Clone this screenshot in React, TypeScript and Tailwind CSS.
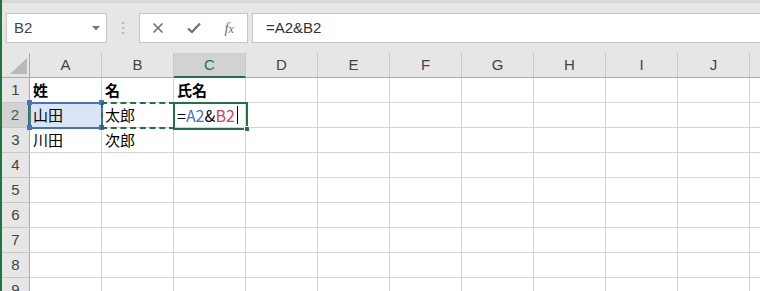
import React from "react"

const cols = ["A", "B", "C", "D", "E", "F", "G", "H", "I", "J", ""]
const rows = [1, 2, 3, 4, 5, 6, 7, 8, 9]

const data: Record<string, React.ReactNode> = {
  A1: <span className="font-bold">姓</span>,
  B1: <span className="font-bold">名</span>,
  C1: <span className="font-bold">氏名</span>,
  A2: "山田",
  B2: "太郎",
  C2: (
    <span className="flex items-center text-[16px]">
      <span>=</span>
      <span className="text-[#4a6fd0]">A2</span>
      <span>&amp;</span>
      <span className="text-[#d23f63]">B2</span>
      <span className="ml-[2px] inline-block h-[18px] w-px bg-black" />
    </span>
  ),
  A3: "川田",
  B3: "次郎",
}

function Handle({ className }: { className: string }) {
  return <div className={"absolute h-[5px] w-[5px] " + className} />
}

export default function App() {
  return (
    <div className="flex h-[291px] w-[760px] overflow-hidden bg-white font-['Liberation_Sans',sans-serif]">
      <div className="w-[2px] shrink-0 bg-[#217346]" />
      <div className="flex min-w-0 flex-1 flex-col">
        {/* formula toolbar */}
        <div className="flex h-[53px] shrink-0 items-start border-t-[3px] border-[#d9d9d9] bg-[#e6e6e6] pl-[4px] pt-[10px]">
          <div className="flex h-[30px] w-[101px] items-center justify-between border border-[#c6c6c6] bg-white pl-[7px] pr-[6px] text-[15px] text-[#444]">
            <span>B2</span>
            <svg width="8" height="5" viewBox="0 0 8 5">
              <path d="M0 0 L8 0 L4 4.5 Z" fill="#7a7a7a" />
            </svg>
          </div>
          <div className="flex h-[30px] w-[32px] flex-col items-center justify-center gap-[3px]">
            <div className="h-[2px] w-[2px] bg-[#b5b5b5]" />
            <div className="h-[2px] w-[2px] bg-[#b5b5b5]" />
            <div className="h-[2px] w-[2px] bg-[#b5b5b5]" />
          </div>
          <div className="flex h-[30px] w-[109px] items-center border border-[#c6c6c6] bg-white">
            <div className="flex w-[36px] justify-center">
              <svg width="12" height="12" viewBox="0 0 12 12">
                <path d="M1.5 1.5 L10.5 10.5 M10.5 1.5 L1.5 10.5" stroke="#6f6f6f" strokeWidth="1.6" />
              </svg>
            </div>
            <div className="flex w-[36px] justify-center">
              <svg width="14" height="12" viewBox="0 0 14 12">
                <path d="M1 6.5 L5 10 L13 1.5" stroke="#6f6f6f" strokeWidth="2.2" fill="none" />
              </svg>
            </div>
            <div className="flex w-[36px] justify-center font-['Liberation_Serif',serif] text-[15px] italic text-[#6f6f6f]">
              <span>
                f<span className="text-[12px]">x</span>
              </span>
            </div>
          </div>
          <div className="ml-[4px] flex h-[30px] flex-1 items-center border border-r-0 border-[#c6c6c6] bg-white pl-[13px] text-[15px] text-[#333]">
            =A2&amp;B2
          </div>
        </div>

        {/* sheet grid */}
        <div className="relative flex-1 text-[15px]">
          <div className="flex h-[25px] bg-[#e6e6e6]">
            <div className="relative h-[25px] w-[28px] shrink-0 border-b border-r border-[#ababab]">
              <svg className="absolute left-[8px] top-[5px]" width="17" height="16" viewBox="0 0 17 16">
                <path d="M17 0 L17 16 L0 16 Z" fill="#b9b9b9" />
              </svg>
            </div>
            {cols.map((c, i) =>
              c === "C" ? (
                <div
                  key={i}
                  className="flex h-[25px] w-[72px] shrink-0 items-center justify-center border-b-2 border-r border-b-[#217346] border-r-[#c8c8c8] bg-[#d2d2d2] pt-[1px] text-[#217346]"
                >
                  {c}
                </div>
              ) : (
                <div
                  key={i}
                  className="flex h-[25px] w-[72px] shrink-0 items-center justify-center border-b border-r border-b-[#ababab] border-r-[#c8c8c8] text-[#444]"
                >
                  {c}
                </div>
              )
            )}
          </div>
          {rows.map((r) => (
            <div key={r} className="flex h-[25px]">
              {r === 2 ? (
                <div className="flex h-[25px] w-[28px] shrink-0 items-center justify-center border-b border-r-2 border-b-[#c8c8c8] border-r-[#217346] bg-[#d2d2d2] text-[#217346]">
                  {r}
                </div>
              ) : (
                <div className="flex h-[25px] w-[28px] shrink-0 items-center justify-center border-b border-r border-b-[#c8c8c8] border-r-[#ababab] bg-[#e6e6e6] text-[#444]">
                  {r}
                </div>
              )}
              {cols.map((c, i) => (
                <div
                  key={i}
                  className={
                    "flex h-[25px] w-[72px] shrink-0 items-center border-b border-r border-[#d4d4d4] pl-[3px] font-['Noto_Sans_CJK_JP',sans-serif] text-[15px] text-black " +
                    (c === "A" && r === 2 ? "bg-[#d9e4f5]" : "")
                  }
                >
                  {data[c + r]}
                </div>
              ))}
            </div>
          ))}

          {/* A2 reference (blue) */}
          <div className="pointer-events-none absolute left-[27px] top-[49px] h-[27px] w-[74px] border-2 border-[#4472c4]" />
          <Handle className="left-[25px] top-[47px] bg-[#4472c4]" />
          <Handle className="left-[97px] top-[47px] bg-[#4472c4]" />
          <Handle className="left-[25px] top-[72px] bg-[#4472c4]" />
          <Handle className="left-[97px] top-[72px] bg-[#4472c4]" />

          {/* B2 copy marquee */}
          <div className="pointer-events-none absolute left-[99px] top-[49px] h-[27px] w-[74px] border-2 border-dashed border-[#217346]" />

          {/* C2 active cell */}
          <div className="pointer-events-none absolute left-[171px] top-[49px] h-[28px] w-[75px] border-2 border-[#217346]" />
          <div className="absolute left-[242px] top-[73px] h-[6px] w-[6px] border border-white bg-[#217346]" />
        </div>
      </div>
    </div>
  )
}
